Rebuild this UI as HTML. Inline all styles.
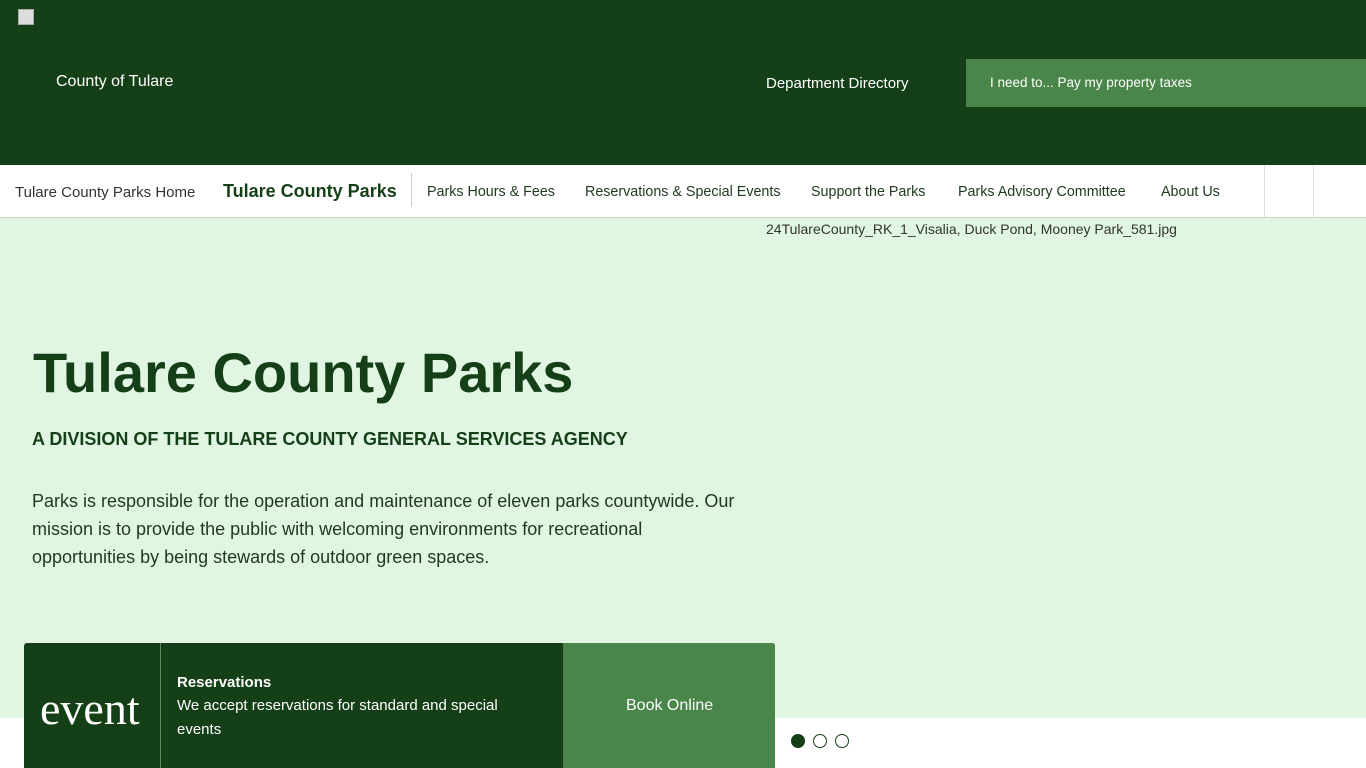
<!DOCTYPE html>
<html><head><meta charset="utf-8"><style>
*{margin:0;padding:0;box-sizing:border-box}
body{width:1366px;height:768px;overflow:hidden;font-family:"Liberation Sans",sans-serif;background:#fff;position:relative}
.top{position:absolute;left:0;top:0;width:1366px;height:165px;background:#143f17}
.abs{position:absolute;white-space:nowrap}
.nav{position:absolute;top:165px;left:0;width:1366px;height:53px;background:#fff;border-bottom:1px solid #c8d8c8}
.nav span{position:absolute;top:19px;font-size:14.3px;color:#1e3a1e}
.hero{position:absolute;top:218px;left:0;width:1366px;height:500px;background:#e0f5e2}
</style></head><body>
<div class="top">
<div class="abs" style="left:18px;top:9px;width:16px;height:16px;border:1px solid #aaa;background:#ddd"></div>
<div class="abs" style="left:56px;top:73px;color:#fff;font-size:16px">County of Tulare</div>
<div class="abs" style="left:766px;top:75px;color:#fff;font-size:15px">Department Directory</div>
<div class="abs" style="left:966px;top:59px;width:400px;height:48px;background:#4a8549"></div>
<div class="abs" style="left:990px;top:75px;color:#fff;font-size:13.5px">I need to... Pay my property taxes</div>
</div>
<div class="nav">
<span style="left:15px;color:#333;font-size:15px">Tulare County Parks Home</span>
<span style="left:223px;top:16px;font-weight:bold;font-size:18px;color:#143f17">Tulare County Parks</span>
<div class="abs" style="left:411px;top:8px;width:1px;height:34px;background:#ccc"></div>
<span style="left:427px">Parks Hours &amp; Fees</span>
<span style="left:585px">Reservations &amp; Special Events</span>
<span style="left:811px">Support the Parks</span>
<span style="left:958px">Parks Advisory Committee</span>
<span style="left:1161px">About Us</span>
<div class="abs" style="left:1264px;top:0;width:1px;height:52px;background:#ddd"></div>
<div class="abs" style="left:1313px;top:0;width:1px;height:52px;background:#ddd"></div>
</div>
<div class="hero">
<div class="abs" style="left:766px;top:3px;font-size:14px;color:#333">24TulareCounty_RK_1_Visalia, Duck Pond, Mooney Park_581.jpg</div>
<div class="abs" style="left:33px;top:122px;font-size:56px;font-weight:bold;color:#143f17">Tulare County Parks</div>
<div class="abs" style="left:32px;top:211px;font-size:18px;font-weight:bold;color:#143f17">A DIVISION OF THE TULARE COUNTY GENERAL SERVICES AGENCY</div>
<div class="abs" style="left:32px;top:269px;font-size:18px;line-height:28px;color:#1e3a1e;white-space:normal;width:706px">Parks is responsible for the operation and maintenance of eleven parks countywide. Our mission is to provide the public with welcoming environments for recreational opportunities by being stewards of outdoor green spaces.</div>
</div>
<div class="abs" style="left:24px;top:643px;width:751px;height:125px;background:#143f17;border-radius:3px 3px 0 0"></div>
<div class="abs" style="left:160px;top:643px;width:1px;height:125px;background:#5c8a5c"></div>
<div class="abs" style="left:40px;top:682px;font-family:'Liberation Serif',serif;font-size:46px;color:#fff">event</div>
<div class="abs" style="left:177px;top:674px;font-size:15px;font-weight:bold;color:#fff">Reservations</div>
<div class="abs" style="left:177px;top:694px;font-size:15px;line-height:24px;color:#fff;white-space:normal;width:350px">We accept reservations for standard and special events</div>
<div class="abs" style="left:563px;top:643px;width:212px;height:125px;background:#4a8549;border-radius:0 3px 0 0"></div>
<div class="abs" style="left:626px;top:697px;font-size:16px;color:#fff">Book Online</div>
<div class="abs" style="left:791px;top:734px;width:14px;height:14px;border-radius:50%;background:#143f17"></div>
<div class="abs" style="left:813px;top:734px;width:14px;height:14px;border-radius:50%;border:1.5px solid #143f17"></div>
<div class="abs" style="left:835px;top:734px;width:14px;height:14px;border-radius:50%;border:1.5px solid #143f17"></div>
</body></html>
